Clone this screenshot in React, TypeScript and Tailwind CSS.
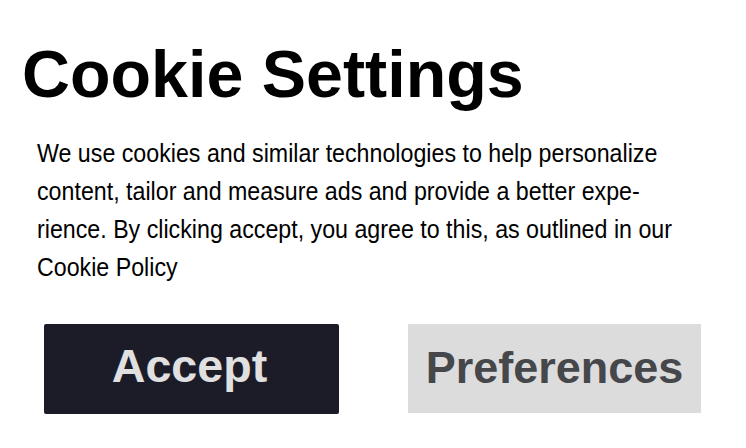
import React from "react";

const lines = [
  "We use cookies and similar technologies to help personalize",
  "content, tailor and measure ads and provide a better expe-",
  "rience. By clicking accept, you agree to this, as outlined in our",
  "Cookie Policy",
];

export default function App() {
  return (
    <div className="w-[746px] h-[448px] bg-white overflow-hidden" style={{ fontFamily: '"Liberation Sans", Arial, sans-serif' }}>
      <h1 className="pl-[22px] pt-[34px] text-[66.4px] leading-[80px] font-bold text-black whitespace-nowrap">Cookie Settings</h1>
      <div className="pl-[37px] mt-[20px] text-[26px] leading-[38px] text-black">
        {lines.map((l) => (
          <div key={l} className="whitespace-nowrap origin-left scale-x-[0.893]">
            {l}
          </div>
        ))}
      </div>
      <div className="flex justify-between pl-[44px] pr-[45px] mt-[38px]">
        <button className="w-[295px] h-[90px] bg-[#1c1c28] rounded-[2px] text-[#e0e0e0] text-[46.6px] font-bold flex items-center justify-center pb-[4px] pr-[4px]">
          Accept
        </button>
        <button className="w-[293px] h-[89px] bg-[#dcdcdc] text-[#45474a] text-[45px] font-bold flex items-center justify-center pb-[2px]">
          Preferences
        </button>
      </div>
    </div>
  );
}
